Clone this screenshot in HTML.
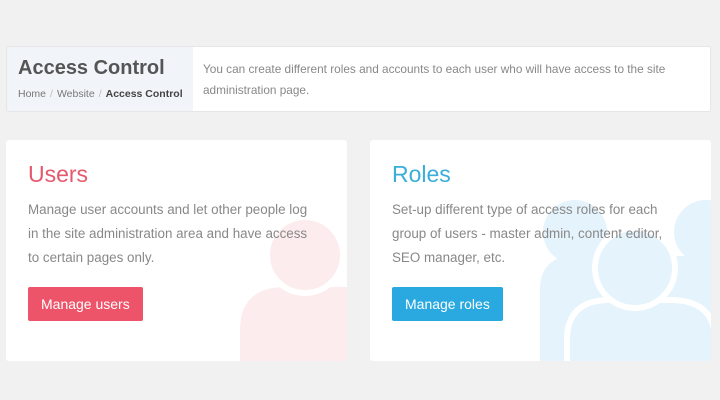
<!DOCTYPE html>
<html><head><style>
body{margin:0;width:720px;height:400px;background:#f1f1f1;font-family:"Liberation Sans",sans-serif;position:relative;overflow:hidden}
.hdr{position:absolute;left:6px;top:46px;width:705px;height:66px;background:#fff;border:1px solid #e6e6e6;box-sizing:border-box;border-radius:2px}
.hl{position:absolute;left:0;top:0;width:186px;height:64px;background:#f1f5fa}
.hl h1{position:absolute;left:11px;top:10px;margin:0;font-size:20px;font-weight:bold;color:#555}
.bc{position:absolute;left:11px;top:41px;font-size:10.5px;color:#777;white-space:nowrap}
.bc span{color:#bbb;margin:0 4px}
.bc b{color:#444}
.desc{position:absolute;left:196px;top:12px;font-size:11.8px;line-height:21px;color:#888;width:500px}
.card{position:absolute;top:140px;width:341px;height:221px;background:#fff;border-radius:3px;overflow:hidden}
.card h2{position:absolute;left:22px;top:21px;margin:0;font-size:23px;font-weight:normal}
.card p{position:absolute;left:22px;top:58px;margin:0;font-size:13.4px;line-height:24px;color:#888;width:292px}
.btn{position:absolute;left:22px;top:147px;height:34px;line-height:34px;padding:0 13px;color:#fff;font-size:14px;border-radius:2px}
svg{position:absolute;left:0;top:0}
</style></head><body>
<div class="hdr"><div class="hl"><h1>Access Control</h1><div class="bc">Home<span>/</span>Website<span>/</span><b>Access Control</b></div></div>
<div class="desc">You can create different roles and accounts to each user who will have access to the site administration page.</div></div>

<div class="card" style="left:6px">
<svg width="341" height="221"><path d="M234 221 L234 190 Q234 147 280 147 L341 147 L341 221Z" fill="#fdecee"/><circle cx="299" cy="115" r="38" fill="#fdecee" stroke="#fff" stroke-width="6"/></svg>
<h2 style="color:#e5596d">Users</h2>
<p>Manage user accounts and let other people log in the site administration area and have access to certain pages only.</p>
<div class="btn" style="background:#ee5469">Manage users</div></div>

<div class="card" style="left:370px">
<svg width="341" height="221"><g fill="#e5f3fc"><circle cx="205" cy="92" r="32"/><circle cx="336" cy="92" r="32"/><path d="M170 221 L170 150 Q170 116 205 116 L341 116 L341 221Z"/></g>
<g fill="#e5f3fc" stroke="#fff" stroke-width="6"><path d="M197 224 L197 200 Q197 160 240 160 L300 160 Q345 160 345 200 L345 224Z"/><circle cx="265" cy="128" r="40"/></g></svg>
<h2 style="color:#3aaed9">Roles</h2>
<p>Set-up different type of access roles for each group of users - master admin, content editor, SEO manager, etc.</p>
<div class="btn" style="background:#29a9e0">Manage roles</div></div>
</body></html>
